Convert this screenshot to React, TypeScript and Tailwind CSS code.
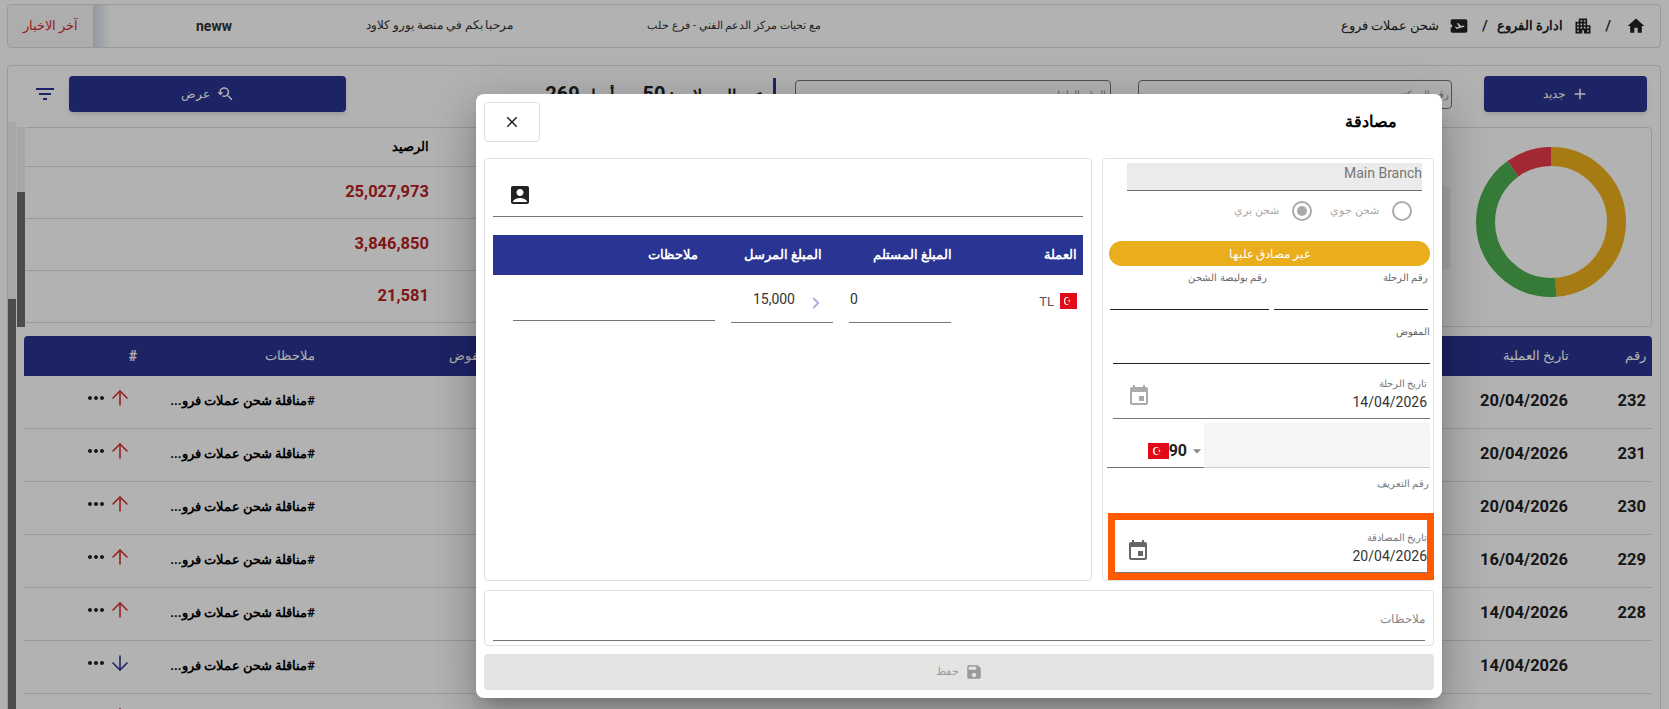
import { ArrowDown, ArrowUp, ChevronRight } from "lucide-react";
import {
  MdAccountBox,
  MdAdd,
  MdAirplaneTicket,
  MdApartment,
  MdArrowDropDown,
  MdClose,
  MdEvent,
  MdFilterList,
  MdHome,
  MdMoreHoriz,
  MdSave,
  MdYoutubeSearchedFor,
} from "react-icons/md";

const rows = [
  { id: "232", date: "20/04/2026", up: true },
  { id: "231", date: "20/04/2026", up: true },
  { id: "230", date: "20/04/2026", up: true },
  { id: "229", date: "16/04/2026", up: true },
  { id: "228", date: "14/04/2026", up: true },
  { id: "", date: "14/04/2026", up: false },
  { id: "", date: "", up: true },
];

function Flag({ w, h }: { w: number; h: number }) {
  return (
    <svg width={w} height={h} viewBox="0 0 30 20" className="shrink-0" preserveAspectRatio="none">
      <rect width="30" height="20" fill="#e30a17" />
      <circle cx="12" cy="10" r="5" fill="#fff" />
      <circle cx="13.3" cy="10" r="4" fill="#e30a17" />
      <polygon points="18.5,10 15.6,11 15.6,9" fill="#fff" />
      <polygon points="16,7.8 17,10.6 15,10.6" fill="#fff" />
    </svg>
  );
}

function Background() {
  return (
    <div className="flex h-full flex-col pl-[7px] pr-[8px] pt-[4px]">
      {/* top bar */}
      <div className="flex h-[44px] shrink-0 items-center justify-between overflow-hidden rounded border border-[#dcdcdc]">
        <div className="flex items-center text-[#222]">
          <MdHome size={20} className="mr-[14px]" />
          <span className="mr-[15px] text-[15px] font-medium">/</span>
          <MdApartment size={20} className="mr-[12px]" />
          <span className="mr-[10px] text-[13px] font-bold">ادارة الفروع</span>
          <span className="mr-[9px] text-[15px] font-medium">/</span>
          <MdAirplaneTicket size={20} className="mr-[13px]" />
          <span className="mr-[10px] text-[13px]">شحن عملات فروع</span>
        </div>
        <div dir="ltr" className="flex h-full items-center">
          <div dir="rtl" className="flex h-full w-[85px] items-center justify-center bg-[#f8f8f8] text-[13px] font-medium text-[#d62b2b]">
            آخر الاخبار
          </div>
          <div className="h-full w-[18px] bg-gradient-to-r from-[#cfdce8] to-white" />
          <div dir="rtl" className="ml-[85px] flex flex-row-reverse items-center gap-[134px] text-[11px] text-[#333]">
            <span className="text-[14px] font-bold">neww</span>
            <span className="text-[11.7px]">مرحبا بكم في منصة يورو كلاود</span>
            <span>مع تحيات مركز الدعم الفني - فرع حلب</span>
          </div>
        </div>
      </div>

      {/* main card */}
      <div className="mt-[17px] flex min-h-0 flex-1 flex-col rounded-t border border-b-0 border-[#dcdcdc]">
        <div className="flex h-[56px] shrink-0 items-start pt-[10px]">
          <button className="mr-[13px] flex h-[36px] w-[163px] items-center justify-center gap-[6px] rounded bg-[#2a3492] text-[12px] text-white shadow-md">
            <MdAdd size={18} />
            <span>جديد</span>
          </button>
          <div className="mr-[32px] mt-[4px] h-[29px] w-[314px] rounded-sm border border-[#777] pr-[2px] pt-[6px] text-[10px] text-[#888]">
            رقم الحركة
          </div>
          <div className="mr-[27px] mt-[4px] h-[29px] w-[316px] rounded-sm border border-[#777] pr-[4px] pt-[6px] text-[10px] text-[#888]">
            الرقم الداخلي
          </div>
          <div className="mr-[19px] mt-[2px] h-[34px] w-[3px] bg-[#2a3492]" />
          <div className="mr-[8px] mt-[3px] text-[16px] font-bold leading-[30px] text-[#222]">
            عدد السجلات : <span className="text-[20px]">50</span> من أصل <span className="text-[20px]">269</span>
          </div>
          <button className="mr-auto flex h-[36px] w-[277px] items-center justify-center gap-[6px] rounded bg-[#2a3492] text-[12px] text-white shadow-md">
            <MdYoutubeSearchedFor size={18} />
            <span>عرض</span>
          </button>
          <MdFilterList size={24} className="ml-[25px] mr-[12px] mt-[6px] text-[#2a3492]" />
        </div>

        <div className="flex min-h-0 flex-1">
          <div className="min-w-0 flex-1 overflow-hidden">
            {/* summary */}
            <div className="ml-px mr-[8px] mt-[5px] flex h-[200px]">
              <div className="flex w-[540px] shrink-0 items-center rounded border border-[#dcdcdc] pr-[25px]">
                <svg width="150" height="150" viewBox="0 0 150 150" className="mb-[11px] shrink-0">
                  <g transform="rotate(-90 75 75)" fill="none" strokeWidth="19">
                    <circle cx="75" cy="75" r="65.5" stroke="#f0b11c" strokeDasharray="200.6 411.5" />
                    <circle cx="75" cy="75" r="65.5" stroke="#4caf50" strokeDasharray="169.8 411.5" strokeDashoffset="-200.6" />
                    <circle cx="75" cy="75" r="65.5" stroke="#e93c49" strokeDasharray="41.2 411.5" strokeDashoffset="-370.4" />
                  </g>
                </svg>
                <div className="mr-[25px] h-[83px] w-[100px] rounded bg-[#f0f0f0]" />
              </div>
              <div className="ml-[1px] mr-[9px] min-w-0 flex-1 border-t border-[#dcdcdc] text-[#222]">
                <div className="grid h-[39px] grid-cols-[1fr_403px] items-center border-b border-[#dcdcdc]">
                  <div />
                  <div className="text-[13px] font-bold text-black">الرصيد</div>
                </div>
                {["25,027,973", "3,846,850", "21,581"].map((v) => (
                  <div key={v} className="grid h-[52px] grid-cols-[1fr_403px] items-center border-b border-[#dcdcdc]">
                    <div />
                    <div className="text-[16.5px] font-bold text-[#b82020]">{v}</div>
                  </div>
                ))}
              </div>
              <div className="flex w-[8px] shrink-0 flex-col bg-[#f0f0f0]">
                <div className="h-[65px] shrink-0" />
                <div className="flex-1 bg-[#6e6e6e]" />
              </div>
            </div>

            {/* table */}
            <div className="ml-[8px] mr-[8px] mt-[9px]">
              <div className="grid h-[40px] grid-cols-[77px_1fr_180px_178px_119px] items-center rounded-t bg-[#2a3492] text-[13px] font-medium text-white">
                <div className="pr-[6px]">رقم</div>
                <div className="pr-[6px]">تاريخ العملية</div>
                <div className="pr-[6px]">المفوض</div>
                <div className="pr-[6px]">ملاحظات</div>
                <div className="pr-[6px] text-[14px] font-bold">#</div>
              </div>
              {rows.map((r, i) => (
                <div key={i} className="grid h-[53px] grid-cols-[77px_1fr_180px_178px_119px] border-b border-[#dcdcdc] text-[#222]">
                  <div className="pr-[6px] pt-[15px] text-[16.5px] font-bold leading-[20px]">{r.id}</div>
                  <div className="pr-[7px] pt-[15px] text-[16.5px] font-bold leading-[20px]">
                    {r.date}
                    {i === 6 && <div className="mr-[720px] h-[16px] w-[91px] rounded-t bg-[#f0b11c]" />}
                  </div>
                  <div />
                  <div className="pr-[6px] pt-[15px] text-[13px] font-bold leading-[20px] text-black">
                    {i < 6 ? "#مناقلة شحن عملات فرو..." : ""}
                  </div>
                  <div className="flex items-start pr-[11px] pt-[10px]">
                    {r.up ? <ArrowUp size={24} strokeWidth={1.6} className="text-[#d8302f]" /> : <ArrowDown size={24} strokeWidth={1.6} className="text-[#2a3492]" />}
                    <MdMoreHoriz size={24} className="text-[#222]" />
                  </div>
                </div>
              ))}
            </div>
          </div>
          <div className="flex w-[8px] shrink-0 flex-col bg-[#f0f0f0]">
            <div className="h-[177px] shrink-0" />
            <div className="flex-1 bg-[#6e6e6e]" />
          </div>
        </div>
      </div>
    </div>
  );
}

function RightPanel() {
  return (
    <div className="rounded border border-[#e0e0e0]">
      <div className="ml-[24px] mr-[11px] mt-[4px] h-[28px] border-b border-[#707070] bg-[#ebebeb] text-[14px] leading-[20px] text-[#777]">
        Main Branch
      </div>
      <div className="flex h-[50px] items-center pb-[10px] pr-[21px] text-[11px] text-[#aaa]">
        <div className="flex w-[100px] items-center gap-[13px]">
          <span className="h-[20px] w-[20px] shrink-0 rounded-full border-2 border-[#aaa]" />
          <span>شحن جوي</span>
        </div>
        <div className="flex items-center gap-[13px]">
          <span className="flex h-[20px] w-[20px] shrink-0 items-center justify-center rounded-full border-2 border-[#aaa]">
            <span className="h-[10px] w-[10px] rounded-full bg-[#aaa]" />
          </span>
          <span>شحن بري</span>
        </div>
      </div>
      <div className="ml-[6px] mr-[3px] flex h-[25px] items-center justify-center rounded-full bg-[#eaad1c] text-[12px] font-medium text-white">
        غير مصادق عليها
      </div>
      <div className="grid grid-cols-[154px_1fr] gap-[5px] pl-[7px] pr-[5px]">
        <div className="h-[44px] border-b border-[#222] pt-[5px] text-[10px] leading-[14px] text-[#666]">رقم الرحلة</div>
        <div className="h-[44px] border-b border-[#222] pr-[2px] pt-[5px] text-[10px] leading-[14px] text-[#666]">رقم بوليصة الشحن</div>
      </div>
      <div className="ml-[10px] mr-[3px] h-[54px] border-b border-[#222] pt-[15px] text-[10px] leading-[14px] text-[#666]">المفوض</div>
      <div className="ml-[10px] mr-[3px] flex h-[55px] items-start justify-between border-b border-[#777] pr-[3px]">
        <div>
          <div className="mt-[13px] h-[14px] text-[10px] leading-[14px] text-[#777]">تاريخ الرحلة</div>
          <div className="mt-[2px] text-[14px] leading-[18px] text-[#333]">14/04/2026</div>
        </div>
        <MdEvent size={24} className="ml-[14px] mt-[20px] text-[#aaa]" />
      </div>
      <div className="ml-[4px] mr-[3px] mt-[4px] flex h-[45px]">
        <div className="w-[226px] shrink-0 rounded-t border-b border-[#ccc] bg-[#f5f5f5]" />
        <div dir="ltr" className="flex flex-1 items-center justify-end border-b border-[#777] pb-[2px] pt-[14px]">
          <Flag w={21} h={16} />
          <span className="text-[16px] font-bold leading-[20px] text-[#222]">90</span>
          <MdArrowDropDown size={20} className="-mr-[3px] text-[#888]" />
        </div>
      </div>
      <div className="mr-[4px] h-[45px] pt-[9px] text-[10px] leading-[14px] text-[#777]">رقم التعريف</div>
      <div className="-mr-px ml-[5px] h-[67px] border-[7px] border-[#ff5a00]">
        <div className="flex h-full items-start justify-between border-b border-[#777]">
          <div>
            <div className="mt-[11px] h-[14px] text-[10px] leading-[14px] text-[#777]">تاريخ المصادقة</div>
            <div className="mt-[2px] text-[14px] leading-[18px] text-[#333]">20/04/2026</div>
          </div>
          <MdEvent size={24} className="ml-[11px] mt-[19px] text-[#666]" />
        </div>
      </div>
    </div>
  );
}

function LeftPanel() {
  return (
    <div className="rounded border border-[#e0e0e0] px-[8px]">
      <div className="flex h-[58px] items-end justify-end border-b border-[#777] pb-[9px] pl-[15px]">
        <MdAccountBox size={24} className="text-[#222]" />
      </div>
      <div className="mt-[18px] grid h-[40px] grid-cols-[125px_125px_118px_1fr] items-center bg-[#2a3492] text-[13px] font-bold text-white">
        <div className="pr-[6px]">العملة</div>
        <div className="pr-[6px]">المبلغ المستلم</div>
        <div className="pr-[11px]">المبلغ المرسل</div>
        <div className="pr-[17px]">ملاحظات</div>
      </div>
      <div className="grid h-[48px] grid-cols-[125px_125px_118px_1fr] text-[14px] leading-[20px] text-[#333]">
        <div className="flex items-start gap-[6px] pr-[6px] pt-[18px]">
          <Flag w={17} h={16} />
          <span className="-mt-[1px] text-[13px] text-[#555]">TL</span>
        </div>
        <div dir="ltr" className="mr-[7px] w-[102px] border-b border-[#777] pl-[1px] pt-[14px] text-left">0</div>
        <div className="flex w-[102px] items-start gap-[12px] border-b border-[#777] pr-[8px] pt-[14px]">
          <ChevronRight size={18} strokeWidth={2.4} className="mt-[5px] shrink-0 text-[#aab0dd]" />
          <span>15,000</span>
        </div>
        <div className="ml-[20px] h-[46px] border-b border-[#777]" />
      </div>
    </div>
  );
}

function Modal() {
  return (
    <div className="absolute left-[476px] top-[94px] flex h-[604px] w-[966px] flex-col rounded-lg bg-white pl-[8px] pr-[8px] pt-[8px] shadow-[0_11px_15px_-7px_rgba(0,0,0,.2),0_24px_38px_3px_rgba(0,0,0,.14),0_9px_46px_8px_rgba(0,0,0,.12)]">
      <div className="flex h-[40px] shrink-0 items-center justify-between">
        <div className="pr-[37px] text-[16px] font-bold text-black">مصادقة</div>
        <button className="flex h-[40px] w-[56px] items-center justify-center rounded border border-[#e0e0e0] text-[#222]">
          <MdClose size={18} />
        </button>
      </div>
      <div className="mt-[16px] grid h-[423px] shrink-0 grid-cols-[332px_1fr] gap-[10px]">
        <RightPanel />
        <LeftPanel />
      </div>
      <div className="mt-[9px] h-[56px] shrink-0 rounded border border-[#e0e0e0] px-[8px]">
        <div className="h-[50px] border-b border-[#777] pt-[20px] text-[11.5px] leading-[16px] text-[#888]">ملاحظات</div>
      </div>
      <button className="mt-[8px] flex h-[36px] shrink-0 items-center justify-center gap-[6px] rounded bg-[#e4e4e4] text-[11px] font-medium text-[#999]">
        <MdSave size={18} />
        <span>حفظ</span>
      </button>
    </div>
  );
}

export default function App() {
  return (
    <div dir="rtl" className="relative h-[709px] w-[1669px] overflow-hidden bg-white font-['Roboto',sans-serif]">
      <Background />
      <div className="absolute inset-0 bg-black/30" />
      <Modal />
    </div>
  );
}
